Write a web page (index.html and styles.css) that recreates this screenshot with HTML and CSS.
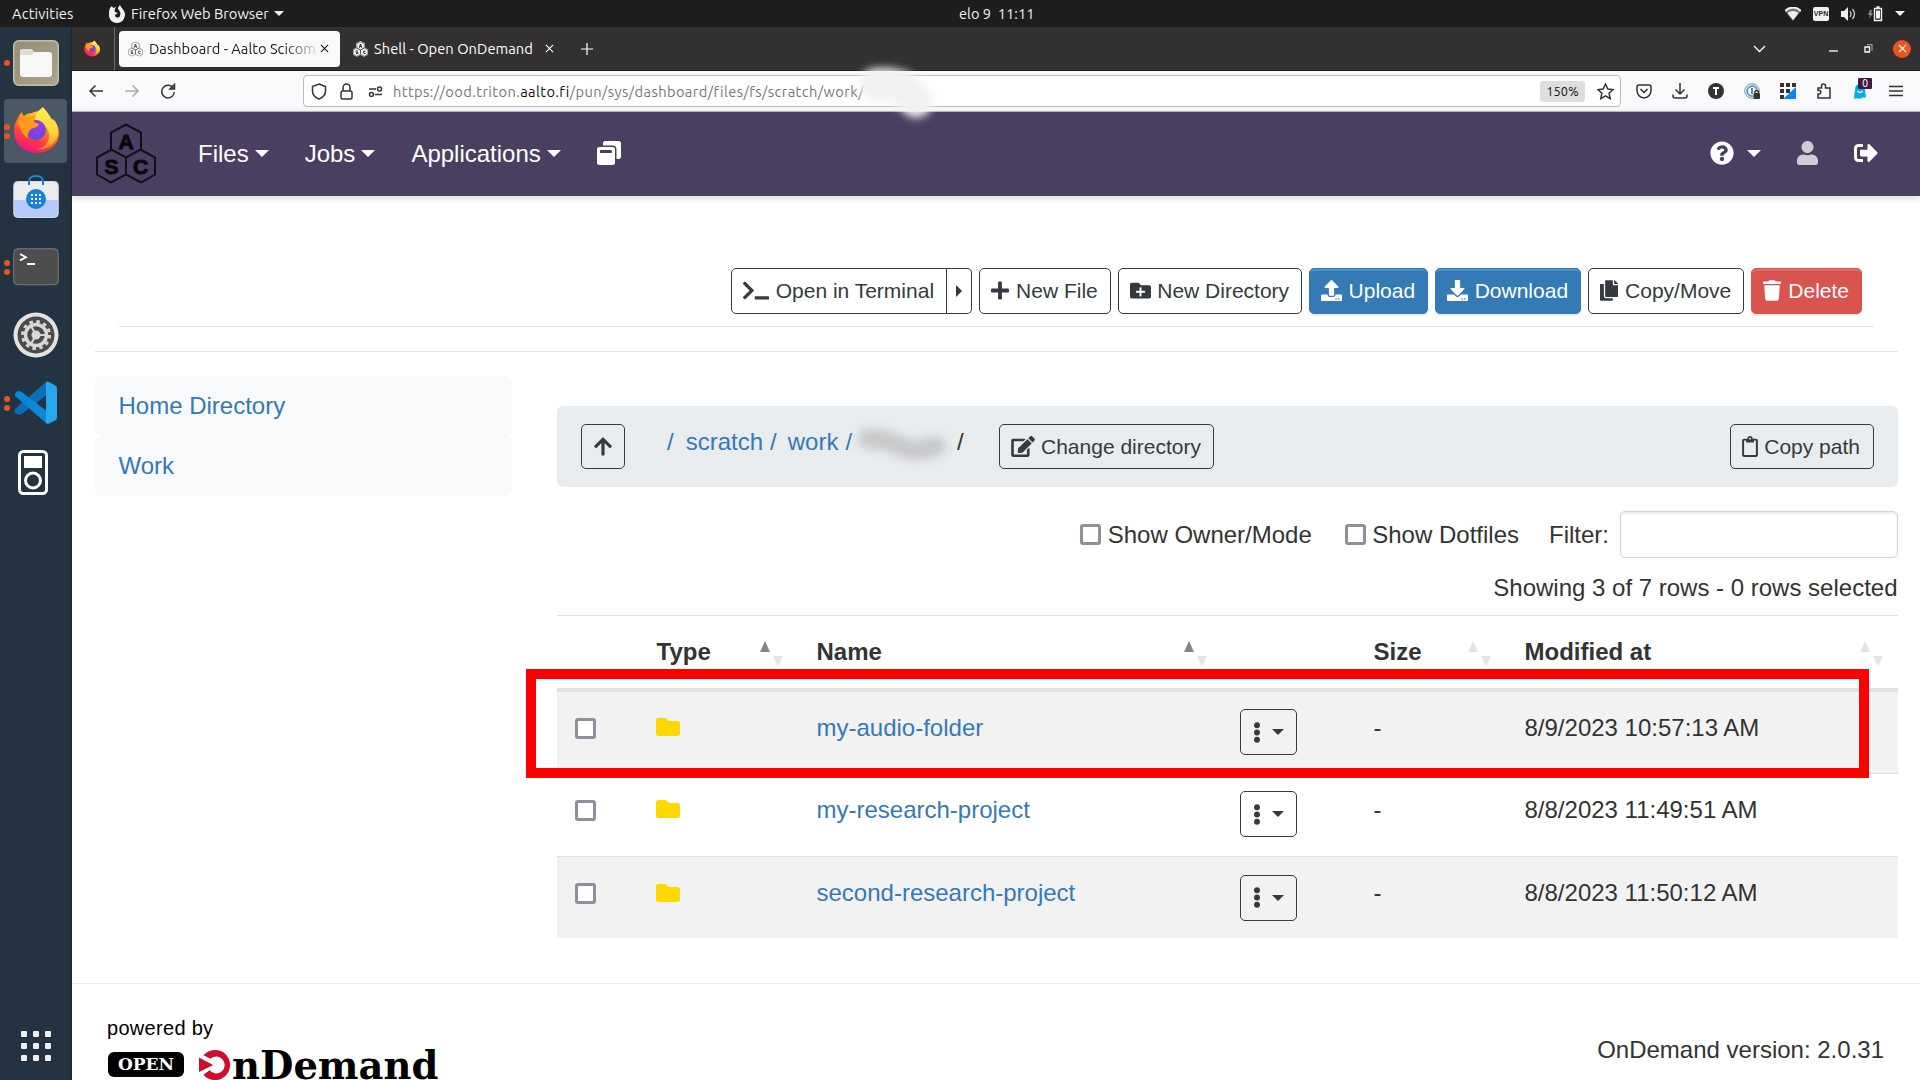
FILE: index.html
```html
<!DOCTYPE html>
<html lang="en">
<head>
<meta charset="utf-8">
<title>Dashboard - Aalto Scicomp OnDemand</title>
<link rel="stylesheet" href="styles.css">
</head>
<body>
<svg class="sprite" width="0" height="0">
  <defs>
    <linearGradient id="ffBody" x1=".8" y1="0" x2=".3" y2="1"><stop offset="0" stop-color="#fff44f"/><stop offset=".35" stop-color="#ff980e"/><stop offset=".7" stop-color="#ff3647"/><stop offset="1" stop-color="#e31587"/></linearGradient>
    <radialGradient id="ffGlobe" cx=".5" cy=".3" r=".7"><stop offset="0" stop-color="#a437e8"/><stop offset="1" stop-color="#5b4fd8"/></radialGradient>
    <linearGradient id="ffTail" x1=".6" y1="0" x2=".5" y2="1"><stop offset="0" stop-color="#fff44f"/><stop offset=".6" stop-color="#ffd03a"/><stop offset="1" stop-color="#ff8a16"/></linearGradient>
    <linearGradient id="filesBg" x1="0" y1="0" x2="1" y2="1"><stop offset="0" stop-color="#958c76"/><stop offset="1" stop-color="#aea48e"/></linearGradient>
  </defs>
  <symbol id="firefox" viewBox="0 0 46 46">
    <path fill="url(#ffBody)" d="M5 11c1-3 3-5 4-6 0 2 1 3 2 4 2-2 5-3 8-3 2-1 5-2 8-2l9 6c6 3 10 9 10 16 0 12-10 20-22.500 20S1 37 1 25c0-6 1-10 4-14z"/>
    <path fill="url(#ffTail)" d="M30 0c-7 5-9 10-7 15 5 0 12 4 13 12 1 9-6 15-13 15 12 2 22-7 22-17 0-6-2-10-5-13 0 3 0 4-1 5 0-7-5-12-9-17z"/>
    <circle cx="23" cy="23" r="10" fill="url(#ffGlobe)"/>
    <path fill="#ff9a1a" d="M5 14c3-2 7-3 11-2 2-2 4-3 6-3-1 2-2 4-1 6l5 2c-1 3-5 4-8 5-2 2-4 5-3 9-4-1-8-7-10-17z"/>
  </symbol>
  <symbol id="hexes" viewBox="0 0 60 60">
    <path fill="none" stroke="currentColor" stroke-width="2" d="M30 1l15 8v17l-15 8-15-8V9zM15.500 26L30 34v17l-15 8-14-8V34zM44.500 26L59 34v17l-14 8-15-8V34z"/>
  </symbol>
  <symbol id="terminal" viewBox="0 0 640 512"><path d="M257.981 272.971L63.638 467.314c-9.373 9.373-24.569 9.373-33.941 0L7.029 444.647c-9.357-9.357-9.375-24.522-.04-33.901L161.011 256 6.990 101.255c-9.335-9.379-9.317-24.544.04-33.901l22.667-22.667c9.373-9.373 24.569-9.373 33.941 0L257.981 239.030c9.373 9.372 9.373 24.568 0 33.941zM640 456v-32c0-13.255-10.745-24-24-24H312c-13.255 0-24 10.745-24 24v32c0 13.255 10.745 24 24 24h304c13.255 0 24-10.745 24-24z"/></symbol>
  <symbol id="plus" viewBox="0 0 448 512"><path d="M416 208H272V64c0-17.670-14.330-32-32-32h-32c-17.670 0-32 14.330-32 32v144H32c-17.670 0-32 14.330-32 32v32c0 17.670 14.330 32 32 32h144v144c0 17.670 14.330 32 32 32h32c17.670 0 32-14.330 32-32V304h144c17.670 0 32-14.330 32-32v-32c0-17.670-14.330-32-32-32z"/></symbol>
  <symbol id="folder-plus" viewBox="0 0 512 512"><path d="M464 128H272l-64-64H48C21.490 64 0 85.490 0 112v288c0 26.510 21.490 48 48 48h416c26.510 0 48-21.490 48-48V176c0-26.510-21.490-48-48-48zm-96 168c0 8.840-7.160 16-16 16h-72v72c0 8.840-7.160 16-16 16h-16c-8.840 0-16-7.160-16-16v-72h-72c-8.840 0-16-7.160-16-16v-16c0-8.840 7.160-16 16-16h72v-72c0-8.840 7.160-16 16-16h16c8.840 0 16 7.160 16 16v72h72c8.840 0 16 7.160 16 16v16z"/></symbol>
  <symbol id="folder" viewBox="0 0 512 512"><path d="M464 128H272l-64-64H48C21.490 64 0 85.490 0 112v288c0 26.510 21.490 48 48 48h416c26.510 0 48-21.490 48-48V176c0-26.510-21.490-48-48-48z"/></symbol>
  <symbol id="upload" viewBox="0 0 512 512"><path d="M296 384h-80c-13.300 0-24-10.700-24-24V192h-87.700c-17.800 0-26.700-21.500-14.100-34.100L242.300 5.700c7.500-7.500 19.800-7.500 27.300 0l152.200 152.200c12.600 12.600 3.700 34.100-14.100 34.100H320v168c0 13.300-10.700 24-24 24zm216-8v112c0 13.300-10.700 24-24 24H24c-13.300 0-24-10.700-24-24V376c0-13.300 10.700-24 24-24h136v8c0 30.900 25.100 56 56 56h80c30.900 0 56-25.100 56-56v-8h136c13.300 0 24 10.700 24 24zm-124 88c0-11-9-20-20-20s-20 9-20 20 9 20 20 20 20-9 20-20zm64 0c0-11-9-20-20-20s-20 9-20 20 9 20 20 20 20-9 20-20z"/></symbol>
  <symbol id="download" viewBox="0 0 512 512"><path d="M216 0h80c13.300 0 24 10.700 24 24v168h87.700c17.800 0 26.700 21.500 14.100 34.100L269.700 378.300c-7.500 7.500-19.800 7.500-27.300 0L90.100 226.100c-12.600-12.600-3.700-34.100 14.100-34.100H192V24c0-13.300 10.700-24 24-24zm296 376v112c0 13.300-10.700 24-24 24H24c-13.300 0-24-10.700-24-24V376c0-13.300 10.700-24 24-24h146.700l49 49c20.100 20.100 52.500 20.100 72.600 0l49-49H488c13.300 0 24 10.700 24 24zm-124 88c0-11-9-20-20-20s-20 9-20 20 9 20 20 20 20-9 20-20zm64 0c0-11-9-20-20-20s-20 9-20 20 9 20 20 20 20-9 20-20z"/></symbol>
  <symbol id="copy" viewBox="0 0 448 512"><path d="M320 448v40c0 13.255-10.745 24-24 24H24c-13.255 0-24-10.745-24-24V120c0-13.255 10.745-24 24-24h72v296c0 30.879 25.121 56 56 56h168zm0-344V0H152c-13.255 0-24 10.745-24 24v368c0 13.255 10.745 24 24 24h272c13.255 0 24-10.745 24-24V128H344c-13.200 0-24-10.800-24-24zm120.971-31.029L375.029 7.029A24 24 0 0 0 358.059 0H352v96h96v-6.059a24 24 0 0 0-7.029-16.970z"/></symbol>
  <symbol id="trash" viewBox="0 0 448 512"><path d="M432 32H312l-9.400-18.700A24 24 0 0 0 281.100 0H166.800a23.720 23.720 0 0 0-21.400 13.300L136 32H16A16 16 0 0 0 0 48v32a16 16 0 0 0 16 16h416a16 16 0 0 0 16-16V48a16 16 0 0 0-16-16zM53.200 467a48 48 0 0 0 47.900 45h245.800a48 48 0 0 0 47.900-45L416 128H32z"/></symbol>
  <symbol id="arrow-up" viewBox="0 0 448 512"><path d="M34.900 289.500l-22.200-22.200c-9.400-9.400-9.400-24.600 0-33.900L207 39c9.400-9.400 24.600-9.400 33.900 0l194.300 194.300c9.400 9.400 9.400 24.600 0 33.900L413 289.400c-9.500 9.500-25 9.300-34.300-.4L264 168.600V456c0 13.300-10.700 24-24 24h-32c-13.300 0-24-10.700-24-24V168.600L69.200 289.100c-9.300 9.800-24.800 10-34.300.4z"/></symbol>
  <symbol id="edit" viewBox="0 0 576 512"><path d="M402.600 83.200l90.200 90.200c3.800 3.800 3.800 10 0 13.800L274.400 405.600l-92.800 10.300c-12.400 1.400-22.900-9.100-21.500-21.500l10.300-92.800L388.800 83.200c3.800-3.800 10-3.800 13.800 0zm162-22.900l-48.800-48.800c-15.200-15.200-39.900-15.200-55.200 0l-35.400 35.400c-3.800 3.800-3.800 10 0 13.800l90.200 90.200c3.800 3.800 10 3.800 13.800 0l35.400-35.400c15.200-15.300 15.200-40 0-55.200zM384 346.200V448H64V128h229.800c3.200 0 6.200-1.300 8.500-3.500l40-40c7.600-7.600 2.200-20.500-8.500-20.500H48C21.500 64 0 85.500 0 112v352c0 26.500 21.500 48 48 48h352c26.500 0 48-21.500 48-48V306.200c0-10.700-12.900-16-20.500-8.500l-40 40c-2.200 2.300-3.500 5.300-3.500 8.500z"/></symbol>
  <symbol id="clipboard" viewBox="0 0 384 512"><path d="M336 64h-80c0-35.300-28.700-64-64-64s-64 28.700-64 64H48C21.500 64 0 85.500 0 112v352c0 26.500 21.500 48 48 48h288c26.500 0 48-21.500 48-48V112c0-26.500-21.500-48-48-48zM192 40c13.300 0 24 10.700 24 24s-10.700 24-24 24-24-10.700-24-24 10.700-24 24-24zm144 418c0 3.300-2.700 6-6 6H54c-3.300 0-6-2.700-6-6V118c0-3.300 2.700-6 6-6h42v36c0 6.600 5.400 12 12 12h168c6.600 0 12-5.400 12-12v-36h42c3.300 0 6 2.700 6 6z"/></symbol>
  <symbol id="dots" viewBox="0 0 192 512"><circle cx="96" cy="80" r="72"/><circle cx="96" cy="256" r="72"/><circle cx="96" cy="432" r="72"/></symbol>
</svg>

<header class="topbar">
  <span class="activities">Activities</span>
  <svg class="app-ico" viewBox="0 0 16 18"><path fill="#f2f2f2" d="M1 3l2-2 1 2 3-1C6 4 5 5 6 7l3 1c-1 1-3 1-3 3 1 2 4 2 5 0 1-3 0-5-2-7 0-2 1-3 2-4 1 3 4 4 5 9 0 5-3 9-8 9s-8-4-8-8c0-3 0-5 1-7z"/></svg>
  <span class="app-name">Firefox Web Browser</span>
  <i class="tri top-tri"></i>
  <span class="clock">elo 9&nbsp; 11:11</span>
  <span class="tray">
    <svg width="16" height="14" viewBox="0 0 16 14"><path d="M0 4Q8-3 16 4L8 14z" fill="#777"/><path d="M0 4Q8-3 16 4" fill="none" stroke="#f2f2f2" stroke-width="2"/><path d="M2.500 6Q8 2 13.500 6L8 13z" fill="#f2f2f2"/></svg>
    <span class="vpn">VPN</span>
    <svg width="15" height="14" viewBox="0 0 15 14"><path d="M0 4h3l4-4v14l-4-4H0z" fill="#f2f2f2"/><path d="M9 4q2 3 0 6M11.500 2q4 5 0 10" fill="none" stroke="#ccc" stroke-width="1.300"/></svg>
    <svg width="15" height="16" viewBox="0 0 15 16"><path d="M2 4L0 9h2l-1 4 4-6H3l1-3z" fill="#888"/><path d="M6.500 2.500h7v12h-7zM8.500 1h3" fill="none" stroke="#f2f2f2" stroke-width="1.400"/><path d="M8 4.500h4v8H8z" fill="#f2f2f2"/></svg>
    <i class="tri"></i>
  </span>
</header>

<div class="desktop">
  <nav class="dock">
    <div class="dock-item"><span class="dots"><b></b></span>
      <svg width="46" height="46" viewBox="0 0 46 46"><rect x=".75" y=".75" width="44.500" height="44.500" rx="5" fill="url(#filesBg)" stroke="#c4bdaa" stroke-width="1.500"/><rect x="7" y="12" width="32" height="25" rx="3" fill="#f8f8f6"/><path d="M7 11q0-2 2-2h9q2 0 3 3c-1 3-3 3-4 3H7z" fill="#e0ddd0"/></svg></div>
    <div class="dock-item active"><span class="dots"><b></b><b></b></span><svg width="46" height="48"><use href="#firefox"/></svg></div>
    <div class="dock-item store">
      <svg width="46" height="46" viewBox="0 0 46 46"><rect x=".75" y="7.500" width="44.500" height="36" rx="4" fill="#ececec"/><path d="M1 26h44v14q0 3-4 3H5q-4 0-4-3z" fill="#b6c9fb"/><rect x=".75" y="7.500" width="44.500" height="36" rx="4" fill="none" stroke="#d5d8e2"/><path d="M16 11V8q0-6 7-6t7 6v3" fill="none" stroke="#1c82d8" stroke-width="2"/><circle cx="23" cy="25" r="10" fill="#1c7fd6"/><g fill="#fff"><path d="M18 20h2v2h-2zM22 20h2v2h-2zM26 20h2v2h-2zM18 24h2v2h-2zM22 24h2v2h-2zM26 24h2v2h-2zM18 28h2v2h-2zM22 28h2v2h-2zM26 28h2v2h-2z"/></g></svg></div>
    <div class="dock-item"><span class="dots"><b></b><b></b></span>
      <svg width="46" height="38" viewBox="0 0 46 38"><rect x=".75" y=".75" width="44.500" height="36" rx="4" fill="#4d4d4d" stroke="#7a7a7a"/><path d="M7 6l6 3.200-6 3.200M14 16h8" fill="none" stroke="#fff" stroke-width="1.800"/></svg></div>
    <div class="dock-item">
      <svg width="46" height="46" viewBox="0 0 46 46"><circle cx="23" cy="23" r="22.500" fill="#e3e3e3"/><circle cx="23" cy="23" r="18.500" fill="#4b4b4b"/><circle cx="23" cy="23" r="13.500" fill="none" stroke="#d8d8d8" stroke-width="3" stroke-dasharray="3.500 3.568"/><circle cx="23" cy="23" r="10.500" fill="none" stroke="#d8d8d8" stroke-width="3.500"/><circle cx="23" cy="23" r="4.500" fill="#d8d8d8"/><path d="M23 23h10M23 23l-5-9M23 23l-5 9" stroke="#d8d8d8" stroke-width="2"/></svg></div>
    <div class="dock-item"><span class="dots"><b></b><b></b></span>
      <svg width="44" height="44" viewBox="0 0 44 44"><path fill="#0a6fb5" d="M32 1L1 28q-1 2 0 4l4 2q2 0 4-2l25-19z"/><path fill="#0b88d6" d="M5 10q-3 0-4 3v2l31 27 2-11L9 12q-2-2-4-2z"/><path fill="#26a7f2" d="M32 1q1-1 3 0l7 4q1 1 1 3v28q0 2-1 3l-8 4-2-1z"/></svg></div>
    <div class="dock-item ipod">
      <svg width="30" height="46" viewBox="0 0 30 46"><rect x="1.500" y="1.500" width="27" height="42" rx="4" fill="none" stroke="#fff" stroke-width="3"/><path d="M6 6h18v12H6z" fill="#fff"/><circle cx="15" cy="30.500" r="7.500" fill="none" stroke="#fff" stroke-width="3"/></svg></div>
    <div class="dock-item apps">
      <svg width="30" height="30" viewBox="0 0 30 30" fill="#eee"><g id="r"><rect width="6" height="6" rx="1"/><rect x="12" width="6" height="6" rx="1"/><rect x="24" width="6" height="6" rx="1"/></g><use href="#r" y="12"/><use href="#r" y="24"/></svg></div>
  </nav>

  <div class="browser">
    <div class="tabs">
      <div class="pinned"><svg width="16" height="17"><use href="#firefox"/></svg></div>
      <div class="tab current"><svg class="fav" viewBox="0 0 60 60"><use href="#hexes" width="60" height="60"/><path d="M25 25l5-15 5 15M27 20h6M20 38q-8-3-8 2t7 5-7 4M50 39q-9-3-9 4t9 5" fill="none" stroke="currentColor" stroke-width="4"/></svg><span class="tab-title fade">Dashboard - Aalto Scicom</span><svg class="x" viewBox="0 0 10 10"><path d="M1 1l8 8M9 1L1 9"/></svg></div>
      <div class="tab"><svg class="fav inv" viewBox="0 0 60 60"><path fill="#f4f4f4" d="M30-2l18 10v17l14 8v19l-17 9-15-7-15 7-17-9V33l14-8V8z"/><use href="#hexes" width="60" height="60"/><path d="M25 25l5-15 5 15M27 20h6M20 38q-8-3-8 2t7 5-7 4M50 39q-9-3-9 4t9 5" fill="none" stroke="currentColor" stroke-width="4"/></svg><span class="tab-title">Shell - Open OnDemand</span><svg class="x" viewBox="0 0 10 10"><path d="M1 1l8 8M9 1L1 9"/></svg></div>
      <svg class="newtab" viewBox="0 0 12 12"><path d="M6 0v12M0 6h12"/></svg>
      <div class="winctl">
        <svg width="13" height="8" viewBox="0 0 13 8"><path d="M1 1l5.500 5.500L12 1"/></svg>
        <svg class="min" width="9" height="8" viewBox="0 0 9 8"><path d="M0 6h9"/></svg>
        <svg class="max" width="9" height="9" viewBox="0 0 9 9"><path d="M1 3h4.500v5H1z"/><path d="M3 .5h5v6" opacity=".5"/></svg>
        <span class="close"><svg width="9" height="9" viewBox="0 0 10 10"><path d="M1 1l8 8M9 1L1 9"/></svg></span>
      </div>
    </div>

    <div class="toolbar">
      <svg class="nav-ico" viewBox="0 0 16 16"><path d="M15 8H2M7.500 2.500L2 8l5.500 5.500"/></svg>
      <svg class="nav-ico dim" viewBox="0 0 16 16"><path d="M1 8h13M8.500 2.500L14 8l-5.500 5.500"/></svg>
      <svg class="nav-ico" viewBox="0 0 16 16"><path d="M13.500 5.500A6.300 6.300 0 1 0 14.300 9M14.500 1.500v4.500H10z"/></svg>
      <div class="urlbar">
        <svg width="16" height="17" viewBox="0 0 16 17"><path d="M8 1l6.500 2.500V8c0 4-2.500 6.500-6.500 8-4-1.500-6.500-4-6.500-8V3.500z"/></svg>
        <svg class="lock" width="13" height="17" viewBox="0 0 13 17"><rect x="1" y="8" width="11" height="8" rx="1.500"/><path d="M3 8V4.500a3.500 3.500 0 0 1 7 0V8"/></svg>
        <svg class="perm" width="15" height="11" viewBox="0 0 15 11"><path d="M1 3h7M7 8.500h7"/><circle cx="11.500" cy="3" r="2"/><circle cx="3.500" cy="8.500" r="2"/></svg>
        <span class="url">https://ood.triton.<b>aalto.fi</b>/pun/sys/dashboard/files/fs/scratch/work/</span>
        <span class="zoom">150%</span>
        <svg class="star" width="17" height="17" viewBox="0 0 17 17"><path d="M8.500 1l2.300 5 5.200.6-3.900 3.600 1.100 5.500-4.700-2.800-4.700 2.800 1.100-5.500L1 6.600 6.200 6z"/></svg>
      </div>
      <div class="addons">
        <svg viewBox="0 0 16 16"><path d="M3 2h10q2 0 2 2v3q0 7-7 8Q1 14 1 7V4q0-2 2-2zM4.500 6L8 9.500 11.500 6"/></svg>
        <svg viewBox="0 0 16 16"><path d="M8 0v11M3.500 6.500L8 11l4.500-4.500M1 11.500V13q0 2 2 2h10q2 0 2-2v-1.500"/></svg>
        <svg viewBox="0 0 16 16"><circle cx="8" cy="8" r="8" fill="#333" stroke="none"/><path d="M5 5h6M8 5v7" stroke="#fff" stroke-width="2"/></svg>
        <svg viewBox="0 0 16 16"><circle cx="8" cy="8" r="7.300" stroke="#8a8f99" stroke-width="1"/><path d="M13 7a5 5 0 1 0-4 6" stroke="#4aa3f0" stroke-width="2"/><path d="M8 5v6" stroke="#555"/><rect x="9.500" y="10" width="6.500" height="6" rx="1" fill="#333" stroke="none"/><path d="M11 10V8.500q1.700-2 3.300 0V10" stroke="#333"/></svg>
        <svg viewBox="0 0 16 16"><path stroke="none" fill="#333" d="M0 0h4v4H0zM6 0h4v4H6zM12 0h4v4h-4zM0 6h4v4H0zM6 6h4v4H6zM0 12h4v4H0z"/><path stroke="none" fill="#0a84ff" d="M16 4v12H3z"/></svg>
        <svg viewBox="0 0 16 16"><path d="M2 5h3.500V3a2 2 0 0 1 4 0v2H14v10H2v-4h1.500a1.800 1.800 0 0 0 0-3.500H2z"/></svg>
        <span class="ghost"><svg viewBox="0 0 16 16"><path stroke="none" fill="#00aef0" d="M3 7q0-6 5-6t5 6l1 7-2 1-1-1-2 2-1-1-2 1-1-1-2 1-1-2z"/><path d="M5.500 8q2.500 3 5 0" stroke="#fff"/></svg><em>0</em></span>
        <svg viewBox="0 0 16 16"><path d="M1 3.500h14M1 8h14M1 12.500h14"/></svg>
      </div>
    </div>

    <div class="page">
      <nav class="navbar">
        <svg class="logo" viewBox="0 0 60 60"><use href="#hexes" width="60" height="60"/><g class="logo-letters"><text x="30" y="25">A</text><text x="15.500" y="50.500">S</text><text x="44.500" y="50.500">C</text></g></svg>
        <a class="menu m1">Files<i class="tri"></i></a>
        <a class="menu m2">Jobs<i class="tri"></i></a>
        <a class="menu m3">Applications<i class="tri"></i></a>
        <svg class="n-ico" viewBox="0 0 512 512"><path d="M512 48v288c0 26.500-21.500 48-48 48h-48V176c0-44.100-35.900-80-80-80H128V48c0-26.500 21.500-48 48-48h288c26.500 0 48 21.500 48 48zM384 176v288c0 26.500-21.500 48-48 48H48c-26.500 0-48-21.500-48-48V176c0-26.500 21.500-48 48-48h288c26.500 0 48 21.500 48 48zm-68 28c0-6.600-5.400-12-12-12H76c-6.600 0-12 5.400-12 12v52h252v-52z"/></svg>
        <div class="nav-right">
          <svg class="n-ico" viewBox="0 0 512 512"><path d="M504 256c0 136.997-111.043 248-248 248S8 392.997 8 256C8 119.083 119.043 8 256 8s248 111.083 248 248zM262.655 90c-54.497 0-89.255 22.957-116.549 63.758-3.536 5.286-2.353 12.415 2.715 16.258l34.699 26.310c5.205 3.947 12.621 3.008 16.665-2.122 17.864-22.658 30.113-35.797 57.303-35.797 20.429 0 45.698 13.148 45.698 32.958 0 14.976-12.363 22.667-32.534 33.976C247.128 238.528 216 254.941 216 296v4c0 6.627 5.373 12 12 12h56c6.627 0 12-5.373 12-12v-1.333c0-28.462 83.186-29.647 83.186-106.667 0-58.002-60.165-102-116.531-102zM256 338c-25.365 0-46 20.635-46 46 0 25.364 20.635 46 46 46s46-20.636 46-46c0-25.365-20.635-46-46-46z"/></svg>
          <i class="tri"></i>
          <svg class="n-ico user" viewBox="0 0 448 512"><path d="M224 256c70.700 0 128-57.300 128-128S294.700 0 224 0 96 57.300 96 128s57.300 128 128 128zm89.600 32h-16.700c-22.200 10.200-46.900 16-72.900 16s-50.600-5.800-72.900-16h-16.700C60.200 288 0 348.200 0 422.400V464c0 26.500 21.500 48 48 48h352c26.500 0 48-21.500 48-48v-41.600c0-74.200-60.200-134.400-134.400-134.400z"/></svg>
          <svg class="n-ico out" viewBox="0 0 512 512"><path d="M497 273L329 441c-15 15-41 4.500-41-17v-96H152c-13.300 0-24-10.700-24-24v-96c0-13.300 10.700-24 24-24h136V88c0-21.400 25.900-32 41-17l168 168c9.300 9.400 9.300 24.600 0 34zM192 436v-40c0-6.600-5.400-12-12-12H96c-17.700 0-32-14.300-32-32V160c0-17.700 14.300-32 32-32h84c6.600 0 12-5.400 12-12V76c0-6.600-5.400-12-12-12H96c-53 0-96 43-96 96v192c0 53 43 96 96 96h84c6.600 0 12-5.400 12-12z"/></svg>
        </div>
      </nav>

      <div class="actions">
        <div class="group"><a class="btn"><svg class="w125"><use href="#terminal"/></svg>Open in Terminal</a><a class="btn split"><i class="tri-r"></i></a></div>
        <a class="btn"><svg class="w87"><use href="#plus"/></svg>New File</a>
        <a class="btn"><svg><use href="#folder-plus"/></svg>New Directory</a>
        <a class="btn primary"><svg><use href="#upload"/></svg>Upload</a>
        <a class="btn primary"><svg><use href="#download"/></svg>Download</a>
        <a class="btn"><svg class="w87"><use href="#copy"/></svg>Copy/Move</a>
        <a class="btn danger"><svg class="w87"><use href="#trash"/></svg>Delete</a>
      </div>
      <div class="rule"></div>

      <div class="columns">
        <aside class="side"><a>Home Directory</a><a>Work</a></aside>
        <main class="files">
          <div class="crumbs">
            <a class="btn up"><svg class="w87"><use href="#arrow-up"/></svg></a>
            <ol class="path"><li>/</li><li>scratch</li><li>/</li><li>work</li><li>/</li><li class="redacted"><svg width="110" height="50" viewBox="0 0 110 50"><path d="M16 19Q34 18 48 26T84 26" /></svg></li><li class="end">/</li></ol>
            <a class="btn chdir"><svg class="w112"><use href="#edit"/></svg>Change directory</a>
            <a class="btn copypath"><svg class="w75"><use href="#clipboard"/></svg>Copy path</a>
          </div>
          <div class="options">
            <label><i class="box"></i>Show Owner/Mode</label>
            <label><i class="box"></i>Show Dotfiles</label>
            <label class="filter">Filter:<input type="text"></label>
          </div>
          <div class="status">Showing 3 of 7 rows - 0 rows selected</div>
          <div class="table-wrap">
            <table>
              <colgroup><col class="c1"><col class="c2"><col class="c3"><col class="c4"><col class="c5"><col class="c6"></colgroup>
              <thead><tr>
                <th></th>
                <th><div>Type<span class="sort asc"><i></i><i></i></span></div></th>
                <th><div>Name<span class="sort asc"><i></i><i></i></span></div></th>
                <th></th>
                <th><div>Size<span class="sort"><i></i><i></i></span></div></th>
                <th><div>Modified at<span class="sort"><i></i><i></i></span></div></th>
              </tr></thead>
              <tbody>
                <tr><td><i class="box"></i></td><td><svg class="fold"><use href="#folder"/></svg></td><td><a>my-audio-folder</a></td><td><span class="btn more"><svg><use href="#dots"/></svg><i class="tri"></i></span></td><td>-</td><td>8/9/2023 10:57:13 AM</td></tr>
                <tr><td><i class="box"></i></td><td><svg class="fold"><use href="#folder"/></svg></td><td><a>my-research-project</a></td><td><span class="btn more"><svg><use href="#dots"/></svg><i class="tri"></i></span></td><td>-</td><td>8/8/2023 11:49:51 AM</td></tr>
                <tr><td><i class="box"></i></td><td><svg class="fold"><use href="#folder"/></svg></td><td><a>second-research-project</a></td><td><span class="btn more"><svg><use href="#dots"/></svg><i class="tri"></i></span></td><td>-</td><td>8/8/2023 11:50:12 AM</td></tr>
              </tbody>
            </table>
            <div class="highlight"></div>
          </div>
        </main>
      </div>

      <footer>
        <div class="powered">
          <span class="by">powered by</span>
          <div class="brand"><span class="open">OPEN</span>
            <svg class="o" viewBox="0 0 36 36"><path d="M5 7A17 17 0 1 1 5 29L12 24A9.500 9.500 0 1 0 13 11z" fill="#d00d2d"/><path d="M0 9.500L16 18 0 26z" fill="#d00d2d"/></svg>
            <span class="ond">nDemand</span></div>
        </div>
        <span class="version">OnDemand version: 2.0.31</span>
      </footer>
    </div>
    <svg class="smudge" width="100" height="70" viewBox="0 0 100 70"><path d="M26 26Q46 24 56 32T66 42" /></svg>
  </div>
</div>
</body>
</html>
```
FILE: styles.css
```css
* { box-sizing: border-box; }
html, body { margin: 0; width: 1920px; height: 1080px; overflow: hidden; }
body { font-family: "Liberation Sans", Arial, sans-serif; font-size: 24px; color: #333; background: #fff; display: flex; flex-direction: column; }
svg { display: block; flex: none; }
.sprite { position: absolute; }
.tri { display: block; width: 0; height: 0; border: 7px solid transparent; border-top-color: currentColor; border-bottom: 0; }

/* desktop panel */
.topbar { height: 27px; flex: none; background: #1d1d1d; color: #f2f2f2; display: grid; grid-template-columns: 109px 22px 143px 685px auto 1fr; align-items: center; font: 14.67px "Ubuntu", "Noto Sans", sans-serif; white-space: nowrap; }
.activities { padding-left: 12px; letter-spacing: .15px; }
.app-ico { width: 16px; height: 18px; }
.topbar .tri { border-width: 5px 5px 0; }
.tray { display: flex; align-items: center; justify-content: flex-end; gap: 12px; padding-right: 15px; }
.vpn { width: 16px; height: 14px; border-radius: 2px; background: #f2f2f2; color: #1d1d1d; font: bold 7px/14px "Liberation Sans", sans-serif; text-align: center; }

.desktop { flex: 1; display: flex; min-height: 0; }
.dock { width: 72px; flex: none; background: #243342; display: flex; flex-direction: column; padding: 2px 0 0; border-right: 1px solid #1c2733; }
.dock-item { position: relative; height: 64px; margin: 2px 4px; display: flex; align-items: center; justify-content: center; border-radius: 4px; flex: none; }
.dock-item.active { background: #4c5865; }
.dock-item.active svg { margin-bottom: 2px; }
.dock-item.store svg { margin-bottom: 4px; }
.dock-item.ipod { padding: 4px 6px 0 0; }
.dock-item.apps { margin-top: auto; margin-bottom: 2px; }
.dots { position: absolute; left: 0; top: 0; height: 64px; display: flex; flex-direction: column; justify-content: center; gap: 3px; }
.dots b { width: 6px; height: 6px; border-radius: 50%; background: #e95420; }

/* browser chrome */
.browser { position: relative; flex: 1; display: flex; flex-direction: column; min-width: 0; font-family: "Ubuntu", "Noto Sans", sans-serif; }
.tabs { height: 44px; flex: none; background: #323031; border-bottom: 1px solid #1c1b1c; display: flex; align-items: center; color: #fff; font-size: 14.67px; white-space: nowrap; }
.pinned { width: 43px; height: 43px; border-right: 1px solid #6b6a6b; padding: 13px 0 0 12px; margin-right: 4px; }
.tab { display: flex; align-items: center; height: 36px; width: 221px; padding-left: 13px; border-radius: 4px; }
.tab.current { background: #f9f9fa; color: #1c1b22; padding-left: 9px; }
.fav { width: 15px; height: 16px; margin-right: 6px; color: #444; }
.fav.inv { color: #222; }
.tab-title { width: 167px; letter-spacing: .05px; }
.tab-title.fade { margin-right: 4px; letter-spacing: 0; overflow: hidden; -webkit-mask-image: linear-gradient(90deg, #000 135px, transparent 172px); mask-image: linear-gradient(90deg, #000 135px, transparent 172px); }
.x { width: 9px; height: 9px; fill: none; stroke: currentColor; stroke-width: 1.2; }
.tab:not(.current) .x { margin-left: 4px; }
.newtab { width: 12px; height: 12px; margin-left: 20px; stroke: #fff; stroke-width: 1.2; }
.winctl { margin-left: auto; display: flex; align-items: center; padding-right: 9px; fill: none; stroke: #fff; stroke-width: 1.3; }
.min { margin-left: 63px; }
.max { margin-left: 26px; }
.close { width: 18px; height: 18px; border-radius: 50%; background: #e95420; margin-left: 20px; display: grid; place-items: center; }
.toolbar { height: 41px; flex: none; background: #f9f9fb; border-bottom: 1px solid #bdbcc4; display: flex; align-items: center; padding: 0 16px; fill: none; stroke: #333; stroke-width: 1.5; }
.nav-ico { width: 16px; height: 16px; margin-right: 20px; }
.nav-ico.dim { stroke: #aaa; }
.urlbar { width: 1318px; height: 32px; margin-left: 107px; border: 1px solid #bbb; border-radius: 4px; background: #fff; display: flex; align-items: center; padding: 0 6px 0 7px; font-size: 14.67px; white-space: nowrap; }
.lock { margin-left: 13px; }
.perm { margin: 0 10px 0 15px; }
.url { color: #777; letter-spacing: .4px; }
.url b { color: #111; font-weight: 400; }
.zoom { margin-left: auto; width: 45px; height: 21px; border-radius: 3px; background: #dedede; color: #111; font-size: 12.8px; line-height: 21px; text-align: center; }
.star { margin-left: 12px; }
.addons { margin-left: auto; display: flex; gap: 20px; }
.addons svg { width: 16px; height: 16px; }
.ghost { position: relative; }
.ghost em { position: absolute; left: 6px; top: -5px; width: 14px; height: 11px; background: #411a45; color: #fff; font: 10px/11px "Noto Sans", sans-serif; text-align: center; border-radius: 1px; }
.smudge { position: absolute; left: 778px; top: 32px; fill: none; stroke: #f1f1f1; stroke-width: 33; stroke-linecap: round; filter: blur(4px); }

/* dashboard page */
.page { flex: 1; display: flex; flex-direction: column; font-family: "Liberation Sans", Arial, sans-serif; min-height: 0; background: #fff; }
.navbar { height: 84px; flex: none; background: #4a3f60; color: #fff; display: flex; align-items: center; padding: 0 42px 1px 24px; box-shadow: 0 2px 8px rgba(0,0,0,.16); }
.logo { width: 60px; height: 61px; color: #111018; margin-right: 42px; }
.logo-letters { fill: #08080c; stroke: #08080c; stroke-width: 1; font: bold 21px "Liberation Sans", sans-serif; text-anchor: middle; }
.menu { display: flex; align-items: center; gap: 6px; margin-right: 36px; }
.n-ico { width: 24px; height: 24px; fill: #fff; margin-bottom: 1px; }
.nav-right { margin-left: auto; display: flex; align-items: center; }
.nav-right .tri { margin-left: 13px; }
.user { width: 21px; margin-left: 36px; fill: #cfccd6; }
.out { margin-left: 36px; }
.actions { margin: 72px 46px 0 47px; height: 59px; flex: none; border-bottom: 1px solid #dee2e6; display: flex; justify-content: flex-end; align-items: flex-start; gap: 7px; padding-right: 12px; }
.group { display: flex; }
.btn { display: flex; align-items: center; height: 46px; padding: 0 12px 1px 11px; border: 1px solid #343a40; border-radius: 5px; color: #343a40; fill: #343a40; font-size: 21px; white-space: nowrap; }
.btn svg { width: 21px; height: 21px; margin-right: 6.5px; }
.btn svg.w125 { width: 26px; }
.btn svg.w112 { width: 24px; margin-right: 6px; }
.btn svg.w87 { width: 18px; margin-right: 7px; }
.btn svg.w75 { width: 16px; margin-right: 6px; }
.group .btn:first-child { border-radius: 5px 0 0 5px; }
.group .split { border-left: 0; border-radius: 0 5px 5px 0; padding: 0; width: 25px; justify-content: center; }
.tri-r { border: 6px solid transparent; border-left-color: #343a40; border-right: 0; }
.primary, .danger { color: #fff; fill: #fff; background: #337ab7; border-color: #337ab7; box-shadow: inset 0 2px 0 rgba(255,255,255,.15), 0 2px 2px rgba(0,0,0,.08); }
.danger { background: #d9534f; border-color: #d9534f; }
.rule { height: 1px; flex: none; background: #e4e4e6; margin: 24px 22px 0 23px; }
.columns { display: flex; padding: 24px 22px 0 23px; flex: none; }
.side { width: 417px; margin-right: 45px; }
.side a { display: block; height: 60px; line-height: 59px; padding-left: 23.5px; border-radius: 6px; background: #f8f9fa; color: #337ab7; }
.files { width: 1341px; padding-top: 30px; }
.crumbs { height: 81px; background: #e9ecef; border-radius: 6px; display: flex; align-items: center; padding: 0 24px; }
.crumbs .btn { height: 45px; padding-bottom: 0; }
.up { width: 44px; padding: 0; justify-content: center; }
.crumbs .up svg { margin: 0; }
.path { list-style: none; margin: 0 0 9px 42px; padding: 0; display: flex; color: #337ab7; width: 332px; }
.path li:nth-child(2) { margin-left: 12px; }
.path li:nth-child(3) { margin-left: 7px; }
.path li:nth-child(4) { margin-left: 11px; }
.path li:nth-child(5) { margin-left: 7px; }
.path .end { color: #333; margin-left: 105px; }
.redacted { position: relative; width: 0; }
.redacted svg { position: absolute; left: 0; top: -8px; fill: none; stroke: #c8c9cb; stroke-width: 20; stroke-linecap: round; filter: blur(5px); }
.copypath { margin-left: auto; }
.crumbs .copypath { padding-right: 13px; }
.options { display: flex; justify-content: flex-end; align-items: center; margin-top: 24px; height: 47px; }
label { display: flex; align-items: center; margin-right: 33px; line-height: 45px; height: 45px; }
.box { display: block; width: 21px; height: 21px; border: 3px solid #8f8f9d; border-radius: 3px; background: #fff; flex: none; }
label .box { margin-right: 6.5px; }
.filter { margin: 0 0 0 -3px; }
input { width: 278px; height: 47px; margin: 0 0 0 11px; padding: 0; border: 1px solid #ced4da; border-radius: 5px; box-shadow: inset 0 2px 2px rgba(0,0,0,.075); background: #fff; }
.status { text-align: right; line-height: 36px; margin: 12px 0 9px; padding-right: .5px; }
.table-wrap { position: relative; }
table { width: 1341px; table-layout: fixed; border-collapse: separate; border-spacing: 0; }
.c1 { width: 81px; } .c2 { width: 160px; } .c3 { width: 424px; } .c4 { width: 133px; } .c5 { width: 151px; } .c6 { width: 392px; }
th, td { padding: 0 18px 0 18.5px; text-align: left; }
th { height: 77px; border-top: 1px solid #dee2e6; border-bottom: 4px solid #dee2e6; }
th div { display: flex; justify-content: space-between; align-items: center; margin: 0 -3px 1px 0; }
.sort { display: flex; width: 23px; height: 25px; justify-content: space-between; align-items: flex-end; margin-top: 3px; }
.sort i { border: 5.500px solid transparent; border-top: 10px solid #e4e4e4; border-bottom: 0; }
.sort i:first-child { align-self: flex-start; border-top: 0; border-bottom: 11px solid #e4e4e4; }
.sort.asc i:first-child { border-bottom-color: #848484; }
td { height: 83px; border-top: 1px solid #dee2e6; padding-bottom: 11px; }
td:nth-child(1), td:nth-child(2), td:nth-child(4) { padding-left: 18px; }
tbody tr:first-child td { border-top: 0; height: 81px; padding-bottom: 10px; }
tbody tr:last-child td { height: 82px; padding-bottom: 9px; }
tbody tr:nth-child(odd) { background: #f2f2f2; }
td a { color: #337ab7; }
td .box { margin-top: 1px; }
.fold { width: 24px; height: 24px; fill: #ffd800; margin-bottom: 1px; }
.more { width: 57px; height: 46px; padding: 0 12px; justify-content: space-between; margin-top: 9px; }
.btn.more svg { width: 8px; margin: 0; }
.more .tri { border-width: 6px 6px 0; }
.highlight { position: absolute; left: -31px; top: 54px; width: 1343px; height: 109px; border: 10px solid #f00; }
footer { margin-top: 45px; height: 97px; flex: none; border-top: 1px solid #e9e9e9; display: flex; justify-content: space-between; padding: 32px 36px 0 35px; }
.by { display: block; color: #000; font-size: 20px; line-height: 24px; letter-spacing: .3px; }
.brand { display: flex; align-items: flex-start; margin-top: 9px; white-space: nowrap; color: #000; }
.open { width: 76px; height: 25px; margin: 3px 0 0 1px; background: #000; color: #fff; border-radius: 6px; font: bold 17px/25px "DejaVu Serif", serif; text-align: center; }
.o { width: 32px; height: 32px; margin: 0 1px 0 15px; }
.ond { font: bold 38.5px/36px "DejaVu Serif", serif; letter-spacing: 0; margin-top: -1px; }
.version { margin-top: 22px; line-height: 24px; }
```
